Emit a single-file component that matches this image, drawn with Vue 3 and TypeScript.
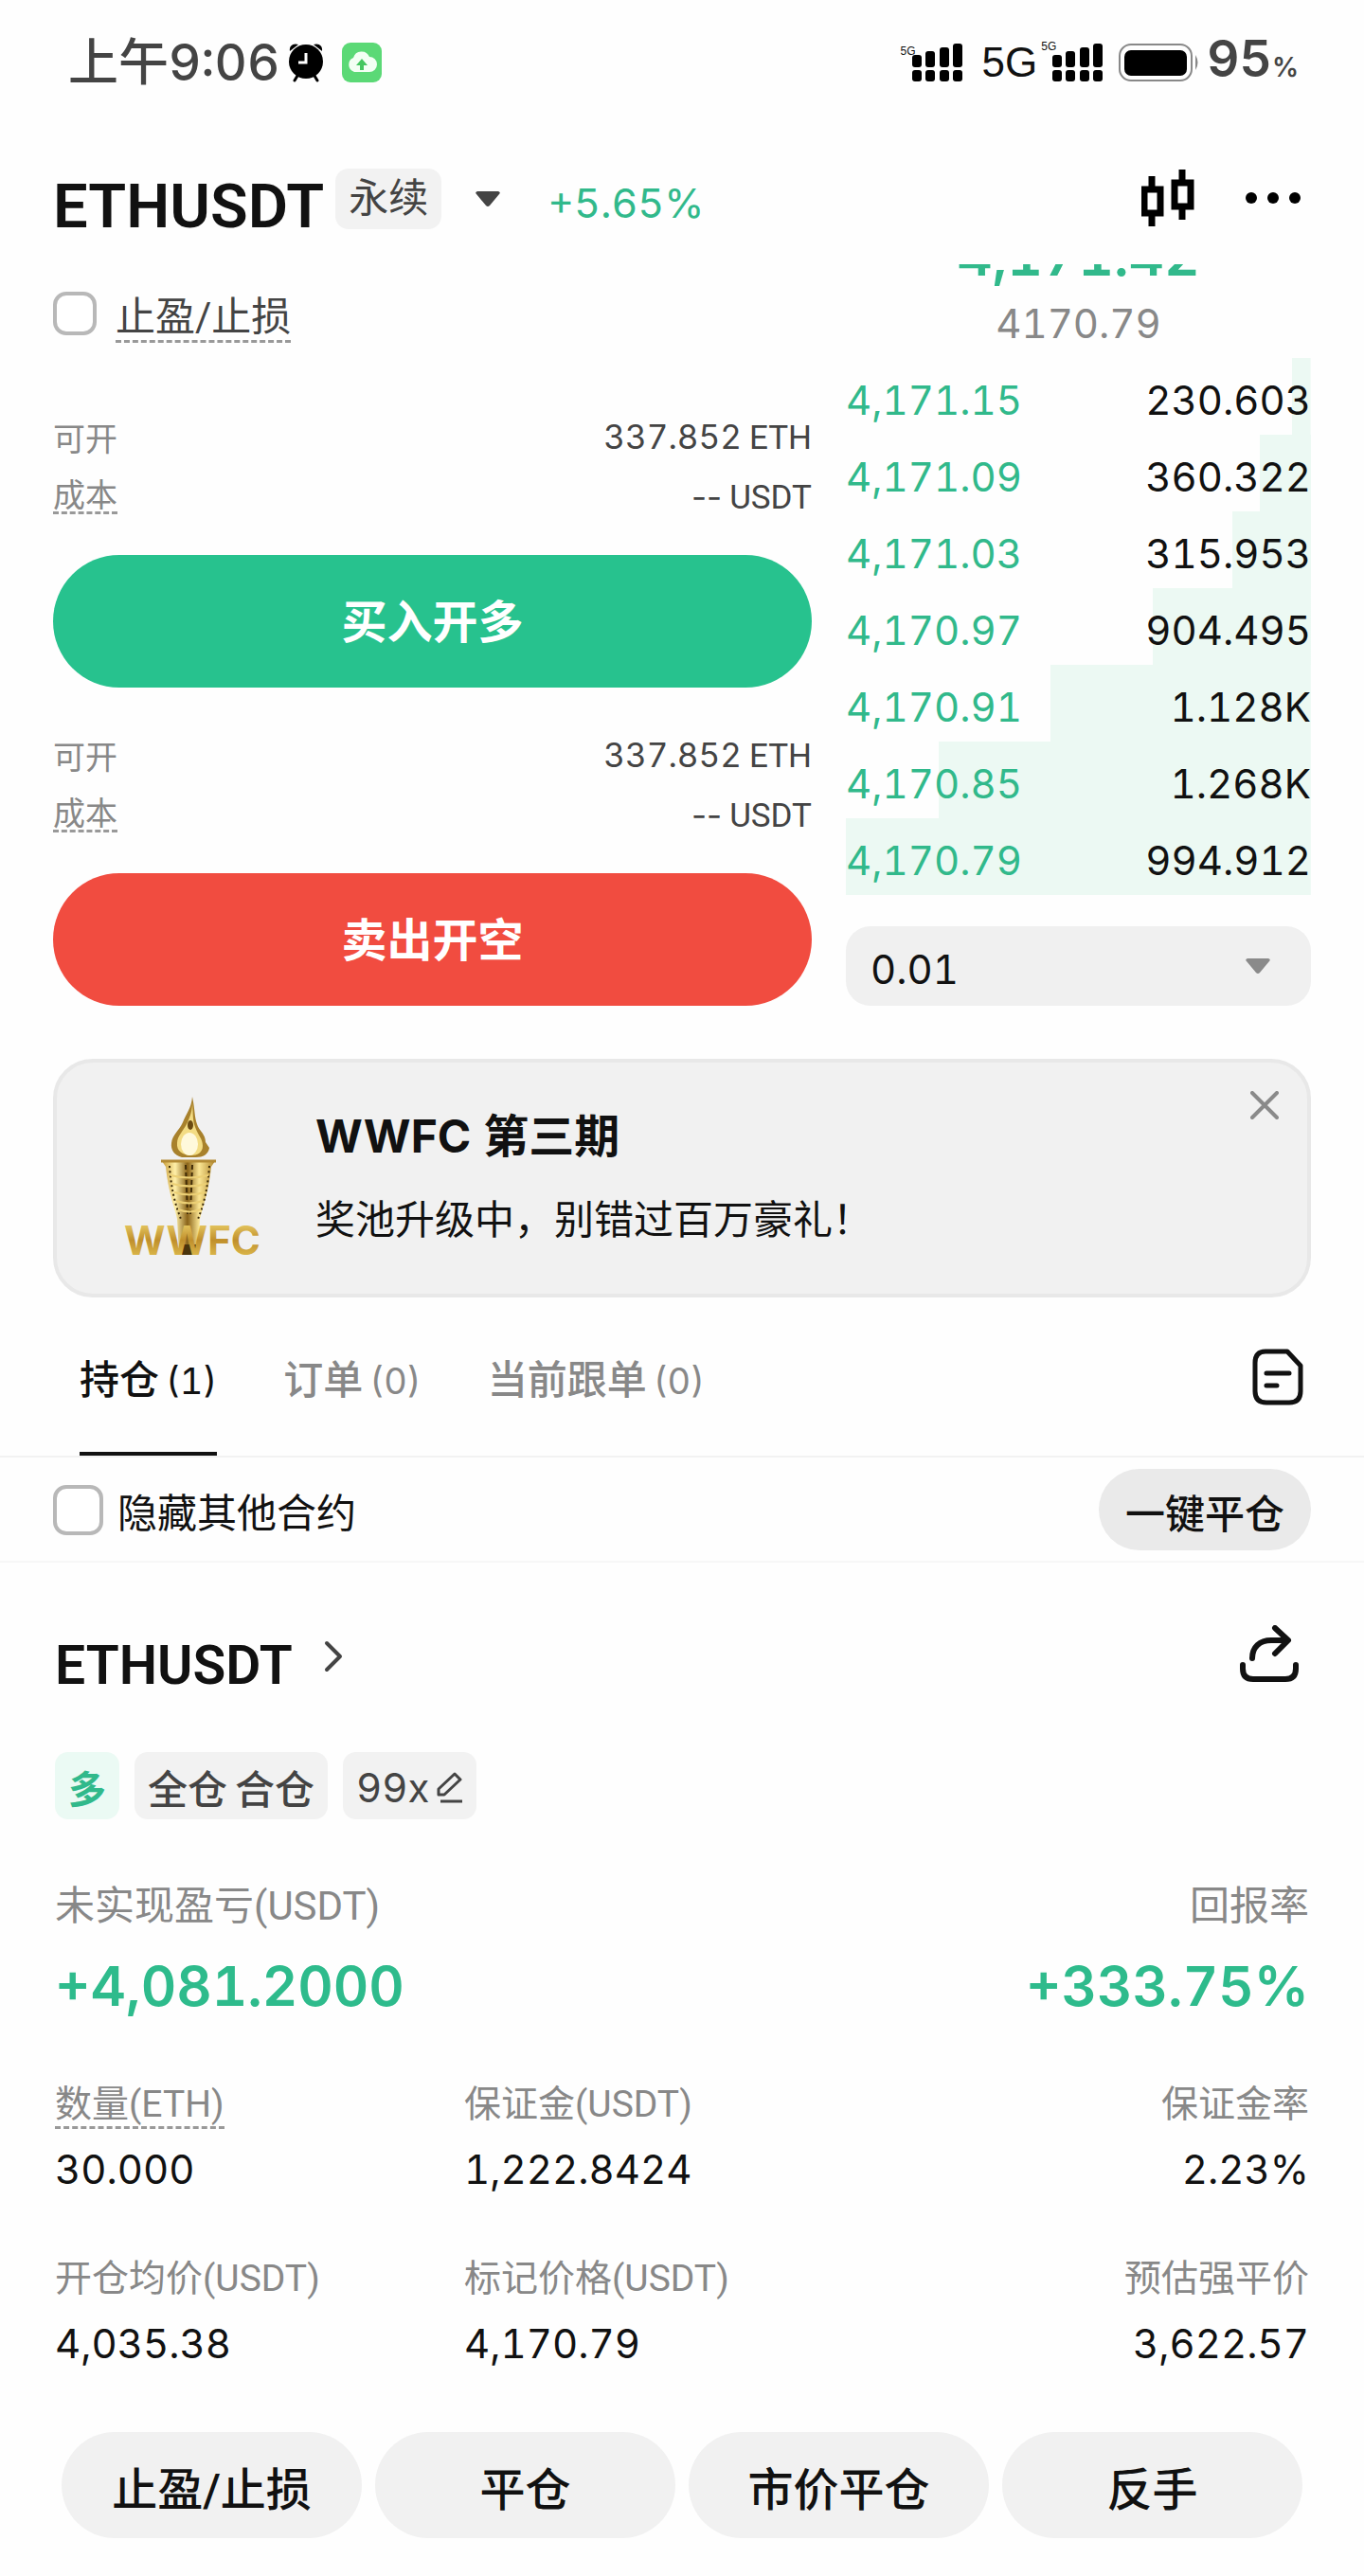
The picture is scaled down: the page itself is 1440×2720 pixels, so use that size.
<script setup lang="ts">
import { ref } from 'vue'

interface BookRow { price: string; amount: string; depth: number }
interface Side { id: string; label: string; open: string; cost: string }
interface Metric { label: string; value: string; hint?: boolean }

const takeProfit = ref(false)
const hideOthers = ref(false)
const bannerOpen = ref(true)
const precision = ref('0.01')
const activeTab = ref('positions')

const book: BookRow[] = [
  { price: '4,171.15', amount: '230.603', depth: 4 },
  { price: '4,171.09', amount: '360.322', depth: 11 },
  { price: '4,171.03', amount: '315.953', depth: 17 },
  { price: '4,170.97', amount: '904.495', depth: 34 },
  { price: '4,170.91', amount: '1.128K', depth: 56 },
  { price: '4,170.85', amount: '1.268K', depth: 80 },
  { price: '4,170.79', amount: '994.912', depth: 100 },
]

const sides: Side[] = [
  { id: 'buy', label: '买入开多', open: '337.852', cost: '--' },
  { id: 'sell', label: '卖出开空', open: '337.852', cost: '--' },
]

const tabs = [
  { id: 'positions', label: '持仓', count: 1 },
  { id: 'orders', label: '订单', count: 0 },
  { id: 'copy', label: '当前跟单', count: 0 },
]

const metrics: Metric[] = [
  { label: '数量(ETH)', value: '30.000', hint: true },
  { label: '保证金(USDT)', value: '1,222.8424' },
  { label: '保证金率', value: '2.23%' },
  { label: '开仓均价(USDT)', value: '4,035.38' },
  { label: '标记价格(USDT)', value: '4,170.79' },
  { label: '预估强平价', value: '3,622.57' },
]

const actions = ['止盈/止损', '平仓', '市价平仓', '反手']
</script>

<template>
  <div class="app">
    <div class="status">
      <div class="status-left">
        <span class="time">上午9:06</span>
        <svg class="alarm" width="36" height="42" viewBox="0 0 36 42" aria-hidden="true">
          <path d="M1 9C0 3 5 0 10 2zM35 9C36 3 31 0 26 2z" />
          <path d="M9 35l-3 5M27 35l3 5" stroke="#000" stroke-width="3" stroke-linecap="round" />
          <circle cx="18" cy="20" r="18" />
          <path d="M18 11v10h-8" fill="none" stroke="#fff" stroke-width="3" />
        </svg>
        <svg width="42" height="42" viewBox="0 0 42 42" aria-hidden="true">
          <rect width="42" height="42" rx="9" fill="#5bd976" />
          <path d="M13 31a8 8 0 0 1-1-15 9 9 0 0 1 17-1 8 8 0 0 1 0 16z" fill="#f3fff4" />
          <path d="M21 17l6 7h-4v5h-4v-5h-4z" fill="#45c760" />
        </svg>
      </div>
      <div class="status-right">
        <div v-for="n in 2" :key="n" class="network" :class="{ second: n === 2 }">
          <span v-if="n === 2" class="net-label">5G</span>
          <span class="net-mini">5G</span>
          <svg width="54" height="40" viewBox="0 0 54 40" aria-hidden="true">
            <rect x="0" y="12" width="10" height="13" rx="3" />
            <rect x="14" y="8" width="10" height="17" rx="3" />
            <rect x="29" y="4" width="10" height="21" rx="3" />
            <rect x="43" y="0" width="10" height="25" rx="3" />
            <rect v-for="x in [0, 14, 29, 43]" :key="x" :x="x" y="28" width="10" height="12" rx="3" />
          </svg>
        </div>
        <svg class="battery" width="86" height="40" viewBox="0 0 86 40" aria-hidden="true">
          <rect x="1" y="1" width="76" height="38" rx="12" fill="none" stroke="#888" stroke-width="2" />
          <rect x="6" y="7" width="66" height="27" rx="7" />
          <path d="M81 12q5 8 0 16z" fill="#888" />
        </svg>
        <span class="charge">95<small>%</small></span>
      </div>
    </div>

    <header class="header">
      <div class="pair">
        <h1>ETHUSDT</h1>
        <span class="kind">永续</span>
        <button class="pick" type="button" aria-label="切换合约">
          <svg width="26" height="16" viewBox="0 0 26 16"><path d="M2 0h22q3 1 1 3L15 15q-2 2-4 0L1 3Q-1 1 2 0z" fill="#444" /></svg>
        </button>
        <span class="change">+5.65%</span>
      </div>
      <div class="tools">
        <button type="button" aria-label="K线">
          <svg width="56" height="60" viewBox="0 0 56 60">
            <path d="M11 7v12M11 48v12M43 0v12M43 41v12" stroke="#000" stroke-width="7" />
            <rect x="3" y="21" width="17" height="25" fill="none" stroke="#000" stroke-width="7" />
            <rect x="35" y="14" width="17" height="25" fill="none" stroke="#000" stroke-width="7" />
          </svg>
        </button>
        <button type="button" aria-label="更多">
          <svg width="60" height="16" viewBox="0 0 60 16"><circle cx="8" cy="8" r="6" /><circle cx="31" cy="8" r="6" /><circle cx="54" cy="8" r="6" /></svg>
        </button>
      </div>
    </header>

    <section class="trade">
      <div class="form">
        <label class="check">
          <input v-model="takeProfit" type="checkbox">
          <span class="hint">止盈/止损</span>
        </label>
        <div v-for="side in sides" :key="side.id" class="side">
          <dl>
            <div><dt>可开</dt><dd><span class="num">{{ side.open }}</span>ETH</dd></div>
            <div><dt><span class="hint">成本</span></dt><dd><span class="num dash">{{ side.cost }}</span>USDT</dd></div>
          </dl>
          <button type="button" :class="['order', side.id]">{{ side.label }}</button>
        </div>
      </div>

      <div class="book">
        <div class="last">4,171.42</div>
        <div class="index">4170.79</div>
        <table>
          <tbody>
            <tr v-for="row in book" :key="row.price" :style="{ '--depth': row.depth + '%' }">
              <td>{{ row.price }}</td>
              <td>{{ row.amount }}</td>
            </tr>
          </tbody>
        </table>
        <div class="precision">
          <select v-model="precision" aria-label="价格精度">
            <option>0.01</option>
            <option>0.1</option>
            <option>1</option>
          </select>
          <svg width="26" height="16" viewBox="0 0 26 16" aria-hidden="true"><path d="M2 0h22q3 1 1 3L15 15q-2 2-4 0L1 3Q-1 1 2 0z" fill="#8a8a8a" /></svg>
        </div>
      </div>
    </section>

    <aside v-if="bannerOpen" class="banner">
      <svg class="torch" width="144" height="176" viewBox="0 0 144 176" aria-hidden="true">
        <defs>
          <linearGradient id="gold" x1="0" x2="1" y1="0" y2="0">
            <stop offset="0" stop-color="#c79a35" />
            <stop offset="0.25" stop-color="#fff0a8" />
            <stop offset="0.48" stop-color="#8a6318" />
            <stop offset="0.7" stop-color="#fbe694" />
            <stop offset="1" stop-color="#b0862c" />
          </linearGradient>
          <linearGradient id="word" x1="0" x2="0" y1="0" y2="1">
            <stop offset="0" stop-color="#f7e27a" />
            <stop offset="0.5" stop-color="#c08f2c" />
            <stop offset="1" stop-color="#e8cb5a" />
          </linearGradient>
        </defs>
        <path d="M71 2c3 14 2 21 5 29 2 7 9 10 9 19l4 6c-1 7-7 10-14 10H60c-8-2-12-8-11-15 1-9 8-13 12-22 4-10 9-15 10-27z" fill="#a8812c" />
        <path d="M71 8c1 10 0 18 3 26 3 9 8 12 8 20 0 7-6 10-12 10-9 0-16-5-15-13 0-8 7-13 11-22 3-7 5-12 5-21z" fill="#f3dc83" />
        <ellipse cx="68" cy="52" rx="9" ry="12" fill="#fff9db" />
        <ellipse cx="69" cy="32" rx="3" ry="5" fill="#6a4a12" />
        <path d="M39 70h56l-4 6c-3 28-9 42-12 55l-2 38H57l-2-38c-3-13-9-27-12-55z" fill="url(#gold)" />
        <path d="M38 70h58" stroke="#b38b35" stroke-width="3" />
        <path d="M47 75q2 32 12 56M89 75q-2 32-12 56" fill="none" stroke="#3b2a08" stroke-width="2" stroke-dasharray="2 3" />
        <path d="M64 74l2 52M71 74l-2 52" stroke="#402c07" stroke-width="2" stroke-dasharray="5 3" />
        <path d="M48 85q19 5 40 0M50 94q18 5 36 0M52 103q16 5 32 0M54 112q14 5 28 0M56 121q12 5 24 0" fill="none" stroke="#ecd075" stroke-width="2" />
        <path d="M60 158h15v11H60z" fill="#4a340c" />
        <text x="71" y="169" text-anchor="middle" font-family="Inter, sans-serif" font-size="42" font-weight="700" fill="url(#word)">WWFC</text>
      </svg>
      <div class="banner-text">
        <h2>WWFC 第三期</h2>
        <p>奖池升级中，别错过百万豪礼！</p>
      </div>
      <button class="close" type="button" aria-label="关闭" @click="bannerOpen = false">
        <svg width="30" height="30" viewBox="0 0 30 30"><path d="M2 2l26 26M28 2L2 28" stroke="#8a8a8a" stroke-width="4" stroke-linecap="round" /></svg>
      </button>
    </aside>

    <nav class="tabs">
      <button v-for="tab in tabs" :key="tab.id" type="button" :class="{ active: tab.id === activeTab }" @click="activeTab = tab.id">
        {{ tab.label }}<span class="count">({{ tab.count }})</span>
      </button>
      <button class="history" type="button" aria-label="历史记录">
        <svg width="54" height="60" viewBox="0 0 54 60">
          <path d="M14 3h23l14 15v27q0 12-12 12H15Q3 57 3 45V15Q3 3 14 3z" fill="none" stroke="#111" stroke-width="5" stroke-linejoin="round" />
          <path d="M15 26h24M15 39h11" stroke="#111" stroke-width="5" stroke-linecap="round" />
        </svg>
      </button>
    </nav>

    <div class="filter">
      <label>
        <input v-model="hideOthers" type="checkbox">
        <span>隐藏其他合约</span>
      </label>
      <button type="button">一键平仓</button>
    </div>

    <article class="position">
      <div class="position-head">
        <h2>ETHUSDT</h2>
        <button type="button" class="open" aria-label="查看合约">
          <svg width="20" height="34" viewBox="0 0 20 34"><path d="M3 3l14 14L3 31" fill="none" stroke="#444" stroke-width="4" stroke-linecap="round" stroke-linejoin="round" /></svg>
        </button>
        <button type="button" class="share" aria-label="分享">
          <svg width="64" height="60" viewBox="0 0 64 60">
            <path d="M4 42v4q0 11 11 11h34q11 0 11-11v-4M14 35c0-12 8-19 20-19h17M38 3l14 13-14 14" fill="none" stroke="#111" stroke-width="6" stroke-linecap="round" stroke-linejoin="round" />
          </svg>
        </button>
      </div>

      <div class="tags">
        <span class="tag long">多</span>
        <span class="tag"><span>全仓</span><span>合仓</span></span>
        <button type="button" class="tag lever">
          <span>99x</span>
          <svg width="28" height="34" viewBox="0 0 28 34" aria-hidden="true">
            <path d="M2 18L19 2l6 6L8 24H2z" fill="none" stroke="#444" stroke-width="3" stroke-linejoin="round" />
            <path d="M4 31h23" stroke="#444" stroke-width="3" />
          </svg>
        </button>
      </div>

      <dl class="summary">
        <div><dt>未实现盈亏(USDT)</dt><dd>+4,081.2000</dd></div>
        <div><dt>回报率</dt><dd>+333.75%</dd></div>
      </dl>

      <dl class="metrics">
        <div v-for="m in metrics" :key="m.label">
          <dt><span :class="{ hint: m.hint }">{{ m.label }}</span></dt>
          <dd>{{ m.value }}</dd>
        </div>
      </dl>

      <div class="actions">
        <button v-for="a in actions" :key="a" type="button">{{ a }}</button>
      </div>
    </article>
  </div>
</template>

<style>
body {
  margin: 0;
  background: #fefefe;
}
</style>

<style scoped>
.app {
  color: #111;
  font-family: Roboto, "Noto Sans CJK SC", sans-serif;
  font-size: 42px;
  font-variant-numeric: tabular-nums;
}
h1, h2, p, dl, dd {
  margin: 0;
}
button {
  padding: 0;
  border: 0;
  background: none;
  color: inherit;
  font: inherit;
  font-variant-numeric: inherit;
}
svg {
  display: block;
  flex: none;
}
input {
  flex: none;
  margin: 0;
  border: 4px solid #b8b8b8;
  border-radius: 14px;
  background: #fff;
  appearance: none;
}
input:checked {
  background: #111;
}
.hint {
  border-bottom: 3px dashed #999;
}

.status {
  display: flex;
  justify-content: space-between;
  height: 132px;
  padding: 0 69px 0 72px;
}
.status-left, .status-right, .network {
  display: flex;
  align-items: center;
}
.time, .charge {
  color: #444;
  font-family: Inter, "Noto Sans CJK SC", sans-serif;
  font-size: 53px;
  font-weight: 500;
  line-height: 60px;
}
.alarm {
  margin: 0 20px 0 10px;
}
.charge {
  font-weight: 600;
}
.charge small {
  font-size: 28px;
}
.net-mini {
  align-self: flex-start;
  margin-right: -4px;
  font-family: "Liberation Sans", sans-serif;
  font-size: 12px;
  line-height: 16px;
}
.second {
  margin-left: 20px;
}
.net-label {
  margin-right: 4px;
  font-family: "Liberation Sans", sans-serif;
  font-size: 44px;
}
.battery {
  margin: 0 7px 0 16px;
}

.header {
  display: flex;
  align-items: flex-end;
  justify-content: space-between;
  height: 110px;
  padding: 0 67px 37px 56px;
}
.pair {
  display: flex;
  align-items: flex-end;
}
h1 {
  font-size: 65px;
  font-weight: 600;
  line-height: 48px;
}
.kind {
  margin-left: 12px;
  padding: 0 14px;
  border-radius: 14px;
  background: #f2f2f2;
  color: #444;
  line-height: 64px;
}
.pick {
  display: flex;
  align-items: center;
  height: 64px;
  margin: 0 50px 0 36px;
}
.change {
  color: #31b98b;
  font-family: Inter, sans-serif;
  font-size: 43px;
  line-height: 56px;
}
.tools {
  display: flex;
  align-items: center;
  gap: 52px;
  height: 66px;
}

.trade {
  display: grid;
  grid-template-columns: 801fr 491fr;
  gap: 36px;
  padding: 0 56px;
}
.form {
  display: flex;
  flex-direction: column;
  gap: 40px;
  padding-top: 29px;
}
.check {
  display: flex;
  align-items: flex-start;
  gap: 20px;
  margin-bottom: 28px;
  color: #444;
  line-height: 48px;
}
.check .hint {
  padding-top: 3px;
}
.check input {
  width: 46px;
  height: 46px;
}
.side dl {
  margin-bottom: 30px;
  font-size: 35px;
}
.side dl div {
  display: flex;
  align-items: center;
  justify-content: space-between;
  height: 63px;
}
.side dt {
  color: #888;
  font-size: 34px;
}
.side dt .hint {
  display: block;
  line-height: 34px;
}
.side dd {
  color: #444;
}
.num {
  margin-right: 8px;
  font-family: Inter, sans-serif;
}
.dash {
  font-variant-numeric: normal;
}
.order {
  display: block;
  width: 100%;
  height: 140px;
  padding-bottom: 6px;
  border-radius: 70px;
  color: #fff;
  font-size: 48px;
  font-weight: 700;
}
.buy {
  background: #27c28e;
}
.sell {
  background: #f14c40;
}

.book {
  overflow: hidden;
  font-family: Inter, sans-serif;
  font-size: 42px;
}
.last {
  margin-top: -43px;
  color: #31b98b;
  font-size: 58px;
  font-weight: 600;
  line-height: 68px;
  text-align: center;
}
.index {
  padding-top: 2px;
  color: #888;
  line-height: 72px;
  text-align: center;
}
table {
  width: 100%;
  border-collapse: collapse;
}
tr {
  background: linear-gradient(#ecf9f3, #ecf9f3) right / var(--depth) 100% no-repeat;
}
td {
  height: 73px;
  padding: 8px 0 0;
  color: #31b98b;
  line-height: 73px;
}
td + td {
  color: #111;
  text-align: right;
}
.precision {
  position: relative;
  margin-top: 33px;
}
select {
  display: block;
  width: 100%;
  height: 84px;
  padding: 6px 26px 0;
  border: 0;
  border-radius: 26px;
  background: #f0f0f0;
  color: #111;
  font: inherit;
  font-variant-numeric: inherit;
  appearance: none;
}
.precision svg {
  position: absolute;
  top: 34px;
  right: 43px;
  pointer-events: none;
}

.banner {
  position: relative;
  display: flex;
  align-items: center;
  gap: 57px;
  height: 244px;
  margin: 56px 56px 0;
  padding-left: 72px;
  border: 4px solid #e8e8e8;
  border-radius: 42px;
  background: #f1f1f1;
}
.torch {
  overflow: visible;
}
.banner-text {
  display: grid;
  gap: 29px;
  line-height: 60px;
}
.banner h2 {
  font-family: Inter, "Noto Sans CJK SC", sans-serif;
  font-size: 48px;
  font-weight: 700;
}
.close {
  position: absolute;
  top: 30px;
  right: 30px;
}

.tabs {
  display: flex;
  gap: 70px;
  padding: 44px 64px 0 84px;
  border-bottom: 2px solid #f2f2f2;
  color: #888;
  font-weight: 500;
  line-height: 88px;
}
.tabs button {
  padding-bottom: 31px;
  border-bottom: 4px solid transparent;
}
.tabs .active {
  border-color: #111;
  color: #111;
}
.count {
  margin-left: 7px;
  font-family: Inter, sans-serif;
  font-size: 38px;
  font-weight: 400;
}
.tabs .history {
  align-self: flex-start;
  margin-left: auto;
  padding: 10px 0 0;
}
.filter {
  display: flex;
  align-items: center;
  justify-content: space-between;
  padding: 12px 56px 11px;
  border-bottom: 2px solid #f7f7f7;
}
.filter label {
  display: flex;
  align-items: center;
  gap: 15px;
}
.filter input {
  width: 53px;
  height: 53px;
}
.filter button {
  height: 86px;
  padding: 2px 28px 0;
  border-radius: 43px;
  background: #eaeaea;
  font-weight: 500;
}

.position {
  padding: 66px 58px 40px;
}
.position-head {
  display: flex;
  align-items: flex-end;
  height: 65px;
}
.position h2 {
  font-size: 57px;
  font-weight: 600;
  line-height: 44px;
}
.open {
  display: flex;
  align-items: center;
  height: 64px;
  margin-left: 33px;
}
.share {
  align-self: flex-start;
  margin: 0 10px 0 auto;
}
.tags {
  display: flex;
  gap: 16px;
  margin-top: 69px;
}
.tag {
  display: flex;
  align-items: center;
  gap: 8px;
  height: 71px;
  padding: 2px 14px 0;
  border-radius: 14px;
  background: #f2f2f2;
  box-sizing: border-box;
  color: #444;
  font-weight: 500;
}
.long {
  background: #ebfaf4;
  color: #31b98b;
  font-size: 40px;
  font-weight: 700;
}
.lever {
  padding-top: 4px;
  font-family: Inter, sans-serif;
  font-weight: 400;
}
.summary {
  display: flex;
  justify-content: space-between;
  margin-top: 62px;
  line-height: 60px;
}
dt {
  color: #888;
}
.summary dd {
  margin-top: 22px;
  color: #2ebb8c;
  font-family: Inter, sans-serif;
  font-size: 58px;
  font-weight: 600;
  line-height: 64px;
}
.summary div:last-child, .metrics div:nth-child(3n) {
  text-align: right;
}
.metrics {
  display: grid;
  grid-template-columns: 432fr 446fr 446fr;
  row-gap: 62px;
  margin-top: 70px;
}
.metrics dt {
  height: 61px;
  font-size: 39px;
}
.metrics dt span {
  display: inline-block;
  line-height: 46px;
}
.metrics dd {
  font-family: Inter, sans-serif;
  font-size: 42px;
  line-height: 61px;
}
.actions {
  display: grid;
  grid-template-columns: repeat(4, 1fr);
  gap: 14px;
  margin: 63px 7px 0;
}
.actions button {
  height: 112px;
  padding-top: 2px;
  border-radius: 56px;
  background: #f1f1f1;
  font-size: 48px;
  font-weight: 500;
}
</style>
